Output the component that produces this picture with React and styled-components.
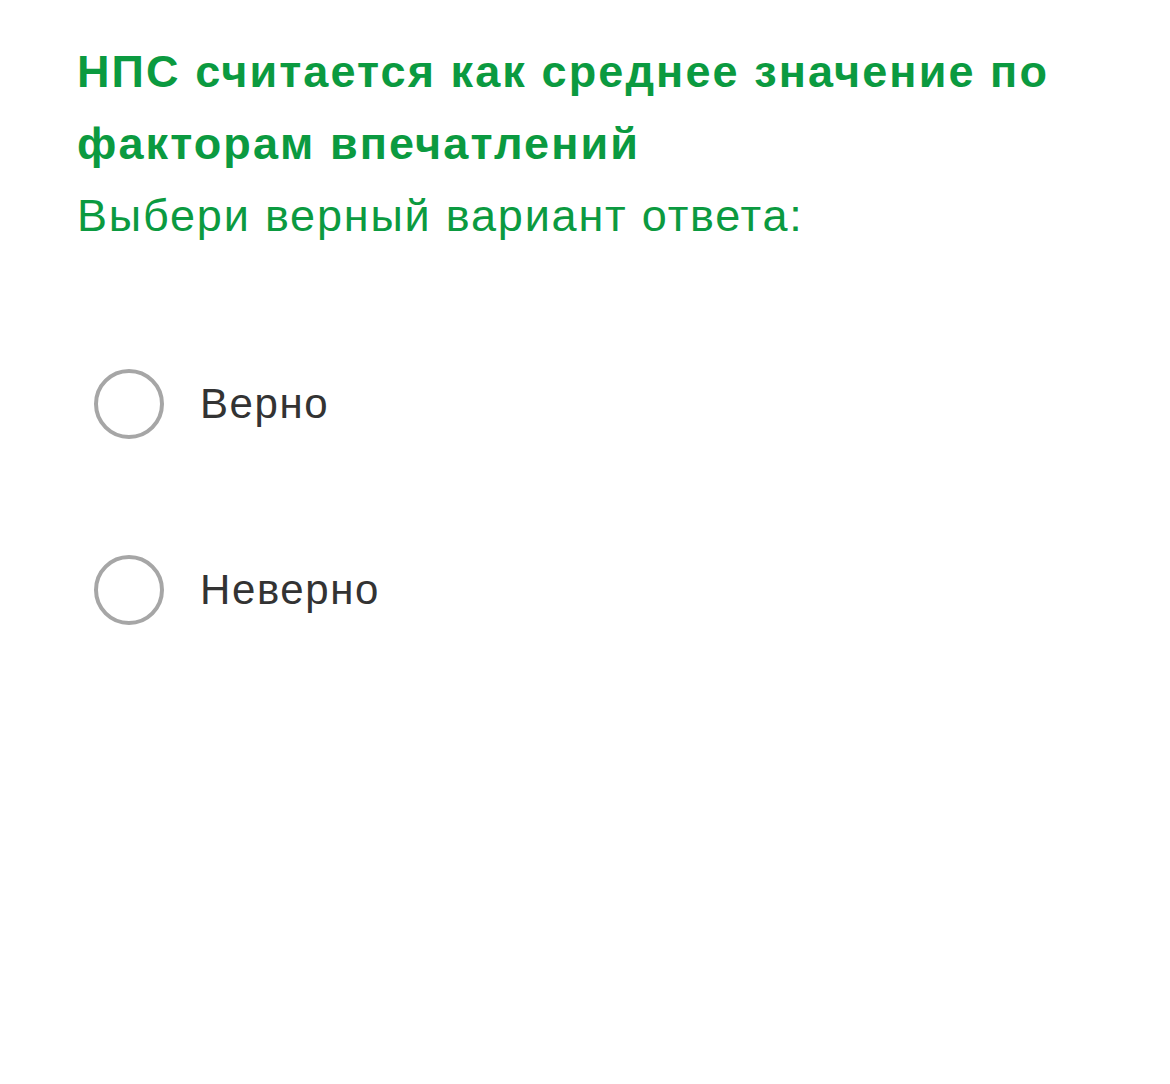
import React from "react";
import styled, { createGlobalStyle } from "styled-components";

const Global = createGlobalStyle`
  html, body { margin: 0; padding: 0; background: #fff; }
  body { font-family: "Liberation Sans", Arial, sans-serif; }
`;

const Page = styled.main`
  padding: 36px 60px 0 77px;
  display: flex;
  flex-direction: column;
`;

const Question = styled.h1`
  margin: 0;
  font-size: 45px;
  line-height: 72px;
  font-weight: 700;
  letter-spacing: 2.1px;
  color: #0b9a40;
`;

const Hint = styled.p`
  margin: 0;
  font-size: 45px;
  line-height: 72px;
  font-weight: 400;
  letter-spacing: 1.8px;
  color: #0b9a40;
`;

const Options = styled.ul`
  list-style: none;
  margin: 117px 0 0;
  padding: 0 0 0 17px;
  display: flex;
  flex-direction: column;
  gap: 116px;
`;

const Option = styled.li`
  display: flex;
  align-items: center;
  gap: 36px;
  height: 70px;
`;

const Radio = styled.span`
  box-sizing: border-box;
  width: 70px;
  height: 70px;
  border-radius: 50%;
  border: 4px solid #a6a6a6;
  flex-shrink: 0;
`;

const Label = styled.span`
  font-size: 42px;
  letter-spacing: 1.6px;
  color: #333;
`;

const answers = ["Верно", "Неверно"];

export default function App() {
  return (
    <>
      <Global />
      <Page>
        <Question>
          НПС считается как среднее значение по факторам впечатлений
        </Question>
        <Hint>Выбери верный вариант ответа:</Hint>
        <Options>
          {answers.map((a) => (
            <Option key={a}>
              <Radio />
              <Label>{a}</Label>
            </Option>
          ))}
        </Options>
      </Page>
    </>
  );
}
